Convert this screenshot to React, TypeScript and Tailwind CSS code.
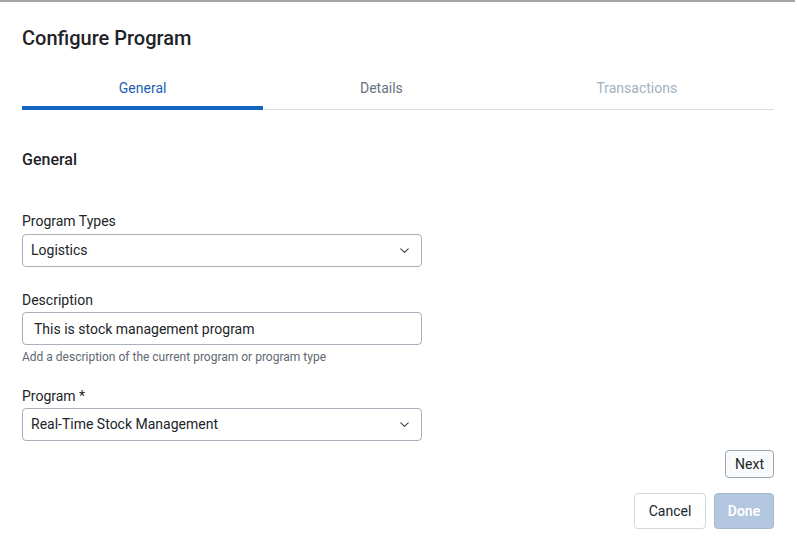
import { useState } from 'react';

const tabs = [
  { id: 'general', label: 'General', disabled: false },
  { id: 'details', label: 'Details', disabled: false },
  { id: 'transactions', label: 'Transactions', disabled: true },
];

function Chevron() {
  return (
    <svg width="9" height="5" viewBox="0 0 9 5" fill="none" className="shrink-0">
      <path d="M0.8 0.8l3.7 3.5 3.7-3.5" stroke="#374151" strokeWidth="1.1" strokeLinecap="round" strokeLinejoin="round" />
    </svg>
  );
}

function SelectBox({ value }: { value: string }) {
  return (
    <div className="flex h-[33px] w-[400px] items-center justify-between rounded-[4px] border border-[#a7b0ba] bg-white pl-2 pr-[12px] text-[14px] text-[#212529]">
      <span>{value}</span>
      <Chevron />
    </div>
  );
}

export default function App() {
  const [active, setActive] = useState('general');

  return (
    <div className="h-[552px] w-[797px] bg-white font-['Roboto',sans-serif] text-[#212529]">
      <div className="h-[2px] w-[795px] bg-[#a3a7ab]"></div>

      <div className="pl-[22px] pr-[23px]">
        <h1 className="pt-[22px] text-[20px] font-medium leading-[28px] text-[#1f2328]">Configure Program</h1>

        <div className="mt-[17px] flex border-b border-[#d8dfe7]">
          {tabs.map((tab) => (
            <button
              key={tab.id}
              disabled={tab.disabled}
              onClick={() => setActive(tab.id)}
              className={`-mb-px flex-auto border-b-4 pt-[9px] pb-[8px] text-center text-[14px] leading-[20px] ${
                active === tab.id
                  ? 'border-[#1565c0] text-[#1b5fb5]'
                  : tab.disabled
                  ? 'border-transparent text-[#a3b0c2]'
                  : 'border-transparent text-[#69737f]'
              }`}
            >
              {tab.label}
            </button>
          ))}
        </div>

        <h2 className="mt-[39px] pt-px text-[16px] font-medium leading-[20px] text-[#1f2328]">General</h2>

        <div className="mt-[40px] flex flex-col">
          <label className="pt-px text-[14px] leading-[20px]">Program Types</label>
          <div className="mt-[3px]">
            <SelectBox value="Logistics" />
          </div>

          <label className="mt-[22px] pt-px text-[14px] leading-[20px]">Description</label>
          <input
            readOnly
            value="This is stock management program"
            className="mt-[2px] h-[33px] w-[400px] rounded-[4px] border border-[#a7b0ba] bg-white px-[11px] text-[14px] text-[#212529] outline-none"
          />
          <p className="mt-[4px] text-[12px] leading-[16px] text-[#5f6874]">
            Add a description of the current program or program type
          </p>

          <label className="mt-[20px] pt-px text-[14px] leading-[20px]">Program *</label>
          <div className="mt-[2px]">
            <SelectBox value="Real-Time Stock Management" />
          </div>
        </div>

        <div className="mt-[9px] flex justify-end">
          <button className="h-[28px] rounded-[4px] border border-[#9aa6b4] bg-[#f8fafc] px-[9px] text-[14px] text-[#212529]">
            Next
          </button>
        </div>

        <div className="mt-[15px] flex justify-end gap-2">
          <button className="h-[36px] w-[72px] rounded-[4px] border border-[#d3d8de] bg-white text-[14px] text-[#212529]">
            Cancel
          </button>
          <button className="h-[36px] w-[60px] rounded-[4px] border border-[#a5b9d4] bg-[#b3c7e0] text-[14px] font-semibold text-white">
            Done
          </button>
        </div>
      </div>
    </div>
  );
}
